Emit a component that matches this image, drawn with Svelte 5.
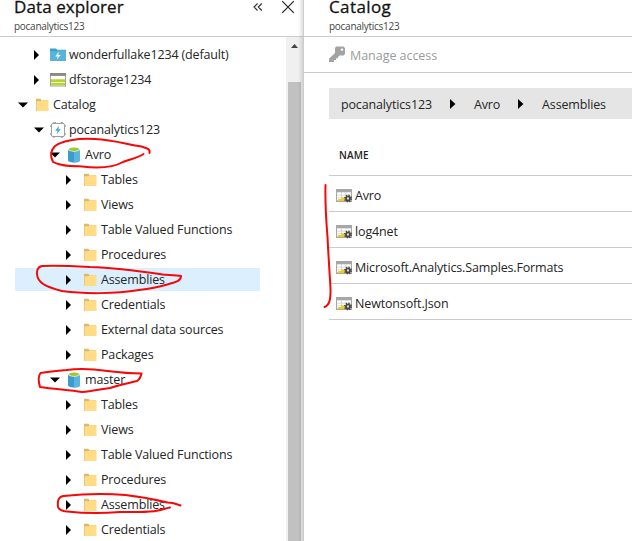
<script>
  const folders = ['Tables', 'Views', 'Table Valued Functions', 'Procedures', 'Assemblies', 'Credentials', 'External data sources', 'Packages'];
  const rows = [
    { label: 'wonderfullake1234 (default)', icon: 'lake', level: 1 },
    { label: 'dfstorage1234', icon: 'storage', level: 1 },
    { label: 'Catalog', icon: 'folder', level: 0, open: true },
    { label: 'pocanalytics123', icon: 'account', level: 1, open: true },
    { label: 'Avro', icon: 'db', level: 2, open: true },
    ...folders.map((label) => ({ label, icon: 'folder', level: 3, selected: label === 'Assemblies' })),
    { label: 'master', icon: 'db', level: 2, open: true },
    ...folders.slice(0, 6).map((label) => ({ label, icon: 'folder', level: 3 }))
  ];
  const assemblies = ['Avro', 'log4net', 'Microsoft.Analytics.Samples.Formats', 'Newtonsoft.Json'];
  const crumbs = ['pocanalytics123', 'Avro', 'Assemblies'];
</script>

{#snippet icon(name)}
  <svg class="icon" width="16" height="16" viewBox="0 0 16 16">
    {#if name === 'folder'}
      <path d="M2 1.800h4.500l1 1.500H14V14H2z" fill="#dbba6c" />
      <path d="M3 4.300h3.600l1-1H14.500V14H3z" fill="#ffdc85" />
      <path d="M2 4h1v10H2z" fill="#ecc978" />
    {:else if name === 'lake'}
      <path d="M0 1.500h6l1.200 1.200H16V14H0z" fill="#3e9fc5" />
      <path d="M0 4.200h6.400l1.200-1H16V14H0z" fill="#59b4d9" />
      <path d="M8.900 4.800 5.300 9.400h2.400l-1.100 3.400 4.100-4.800H8.200z" fill="#fff" />
    {:else if name === 'storage'}
      <path d="M0 1h16v13.500H0z" fill="#a0a1a2" />
      <path d="M0 1h16v2.600H0z" fill="#8a8a8a" />
      <path d="M1 4h14v9.600H1z" fill="#fff" />
      <path d="M1 7.300h14v2.900H1zM1 11h14v2.600H1z" fill="#b8d432" />
    {:else if name === 'account'}
      <path d="M1 5V3.500L3 1h2l1-.5M11 .5l2 .5 2 2.500V5M1 11v2l2 2h2M11 15h2l2-2v-2" fill="none" stroke="#777" />
      <rect x="1.500" y="1.500" width="13" height="13" rx="1.400" fill="#fff" stroke="#a0a0a0" />
      <path d="M9 3.800 5.100 8.800h2.500l-1.100 3.700 4.300-5.200H8.400z" fill="#3cadd9" />
    {:else if name === 'db'}
      <path d="M2 2.500v10.700c0 3 12 3 12 0V2.500z" fill="#3a9bce" />
      <path d="M8 2.500v12.900c3 0 6-.7 6-2.200V2.500z" fill="#5ab4db" />
      <ellipse cx="8" cy="2.500" rx="6" ry="2.200" fill="#e6f3f8" />
      <ellipse cx="8" cy="2.300" rx="4.900" ry="1.700" fill="#a3c928" />
    {:else}
      <path d="M0 1h16v13H0z" fill="#a5a7a9" />
      <path d="M1 4h14v9H1z" fill="#c9cacb" />
      <path d="M1 4.500h4v2.200H1zM5.700 4.500h4v2.200h-4zM10.400 4.500H15v2.200h-4.600zM1 7.400h4v2.200H1zM5.700 7.400h4v2.200h-4zM1 10.300h4v2.200H1zM10.400 7.400H15v2.200h-4.600z" fill="#fff" />
      <path d="m1 13 1.500-2H5V9.500h5V13z" fill="#f0cb25" />
      <circle cx="12" cy="10.500" r="3.200" fill="none" stroke="#444" stroke-width="1.600" stroke-dasharray="1.300 1.213" />
      <circle cx="12" cy="10.500" r="2" fill="#ddd" stroke="#444" stroke-width="1.700" />
    {/if}
  </svg>
{/snippet}

<div class="app">
  <section class="explorer">
    <header>
      <div>
        <h1>Data explorer</h1>
        <p>pocanalytics123</p>
      </div>
      <svg class="controls" width="46" height="16" viewBox="0 0 46 16">
        <path d="m7.500 3.500-3.500 3.500 3.500 3.500M11.800 3.500 8.300 7l3.500 3.500" fill="none" stroke="#333" stroke-width="1.200" />
        <path d="m32.200 1.200 11.600 11.600M43.800 1.200 32.200 12.800" stroke="#222" stroke-width="1.200" />
      </svg>
    </header>
    <div class="body">
      <div class="tree">
        {#each rows as row}
          <div class={['row', `level${row.level}`, row.selected && 'selected']}>
            <svg class="arrow" width="16" height="12" viewBox="0 0 16 12">
              <path d={row.open ? 'M0 3.600h10L5 8.600z' : 'M0 1v10L5 6z'} />
            </svg>
            {@render icon(row.icon)}
            <span>{row.label}</span>
          </div>
        {/each}
      </div>
      <div class="scroll">
        <svg width="17" height="17" viewBox="0 0 17 17"><path d="M5 11h7L8.500 7z" fill="#444" /></svg>
        <div class="thumb"></div>
      </div>
    </div>
    <div class="shade"></div>
  </section>

  <section class="catalog">
    <header>
      <div>
        <h1 class="wide">Catalog</h1>
        <p>pocanalytics123</p>
      </div>
    </header>
    <div class="toolbar">
      <svg width="17" height="17" viewBox="0 0 17 17">
        <path d="M7 .5h7.500L16 2v6l-1.500 1.500h-4L9 11v1.200H7V14H5v2H0v-3.200L6 7V2z" fill="#a3a3a3" />
        <circle cx="13" cy="3.600" r="1.200" fill="#fff" />
      </svg>
      <span>Manage access</span>
    </div>
    <nav>
      {#each crumbs as crumb, i}
        {#if i}<svg width="6" height="10" viewBox="0 0 6 10"><path d="M0 0v10L5.400 5z" /></svg>{/if}
        <span>{crumb}</span>
      {/each}
    </nav>
    <div class="table">
      <div class="head">NAME</div>
      {#each assemblies as name}
        <div class="item">{@render icon('assembly')}<span>{name}</span></div>
      {/each}
    </div>
  </section>

  <svg class="ink" width="632" height="541" viewBox="0 0 632 541">
    <path d="M149.500 153c1-4-3-5-8-6.500C126 144 113 140 95 139c-18-1-33 2-40 7-5 5-5 10-2 16 7 4 17 4 29 4.500C104 169 116 166 123 162c7-3 15-4 20.500-8" />
    <path d="M163 274.500C139 271 119 268 90 267c-17-1-35-2-48-1-5 1-6 6-4.500 11C40 285 51 288 62 291c22 3 53 3 77-1 17-2 23-4 30-6 7-2 12-3 12-8-5-1-13-1-18-1.500" />
    <path d="M141.500 373.500c-12 0-22-1-34-2.500-14-2-26-3-41-1-10 1-19 2-26 3-3 4-2 9-.5 14 13 2 28 3 42 5 11-.5 18-3 28-4 12-4 20-5 27-7 3-2 4-5 4.500-7.500" />
    <path d="M180.500 505.500c-5-2-8-3-13-3-12-3-29-6-42-7.500-19-1.500-43-1-62 1-6 1-6 6-5.500 11 1 3 4 4 9 4.500 19 2 35 2 53 .5 15-.5 27 1 38-1.500 5-1 7-2 12-3" />
    <path d="M325.500 185c-.5 20 .5 34 2 52 1 20 2 35 3 51 0 7 .5 17-6 19" />
  </svg>
</div>

<style>
  .app {
    position: relative;
    display: flex;
    width: 632px;
    height: 541px;
    overflow: hidden;
    background: #fff;
    color: #252525;
    font: 12.5px/23px "Open Sans", "Noto Sans", sans-serif;
    letter-spacing: -0.15px;
    white-space: nowrap;
  }
  .app :global(svg) { display: block; flex: none; }
  section { display: flex; flex-direction: column; }
  header {
    display: flex;
    justify-content: space-between;
    box-sizing: border-box;
    height: 37px;
    flex: none;
    border-bottom: 1px solid #ccc;
  }
  h1 {
    margin: 0;
    padding-bottom: 5px;
    font-size: 17px;
    line-height: 14px;
    font-weight: 500;
    color: #111;
    letter-spacing: 0.1px;
    -webkit-text-stroke: 0.3px #111;
  }
  .wide { letter-spacing: 0.4px; }
  p { margin: 0; font-size: 10px; line-height: 14px; letter-spacing: -0.27px; color: #444; }
  .explorer { position: relative; width: 303px; flex: none; }
  .explorer header { padding: 0 9px 0 14px; }
  .controls { margin-right: -2px; }
  .body { display: flex; flex: 1; min-height: 0; }
  .tree { flex: 1; padding: 6px 26px 0 15px; overflow: hidden; }
  .row {
    display: flex;
    align-items: center;
    height: 23px;
    margin-bottom: 2px;
    padding-left: 3px;
  }
  .level1 { padding-left: 19px; }
  .level2 { padding-left: 35px; }
  .level3 { padding-left: 51px; }
  .selected { background: #dceffe; }
  .row span { margin-left: 3px; }
  .scroll { width: 17px; background: #f0f0f0; }
  .thumb { width: 13px; height: 459px; margin: 28px 2px 0; background: #c1c1c1; }
  .shade {
    position: absolute;
    top: 0;
    right: 0;
    width: 5px;
    height: 100%;
    background: linear-gradient(to right, transparent, rgba(0, 0, 0, 0.12));
  }
  .catalog { flex: 1; min-width: 0; border-left: 1px solid #ccc; }
  .catalog header { padding-left: 25px; }
  .toolbar {
    display: flex;
    align-items: center;
    gap: 4px;
    height: 35px;
    padding-left: 25px;
    border-bottom: 1px solid #ccc;
    color: #9b9b9b;
    letter-spacing: -0.04px;
  }
  .toolbar span { padding-top: 2px; }
  nav {
    display: flex;
    align-items: center;
    height: 31px;
    margin: 15px 0 0 25px;
    padding-left: 12px;
    background: #e5e5e5;
  }
  nav span { padding-top: 1px; }
  nav svg { margin: 0 18px; }
  .table { margin-left: 25px; }
  .head {
    height: 56px;
    padding-left: 10px;
    border-bottom: 1px solid #ccc;
    font-size: 10px;
    font-weight: 600;
    line-height: 73px;
    letter-spacing: 0.1px;
  }
  .item {
    display: flex;
    align-items: center;
    gap: 3px;
    box-sizing: border-box;
    height: 36px;
    padding: 4px 0 0 7px;
    border-bottom: 1px solid #ccc;
  }
  .ink { position: absolute; inset: 0; fill: none; stroke: #f50808; stroke-width: 2; stroke-linecap: round; stroke-linejoin: round; }
</style>
